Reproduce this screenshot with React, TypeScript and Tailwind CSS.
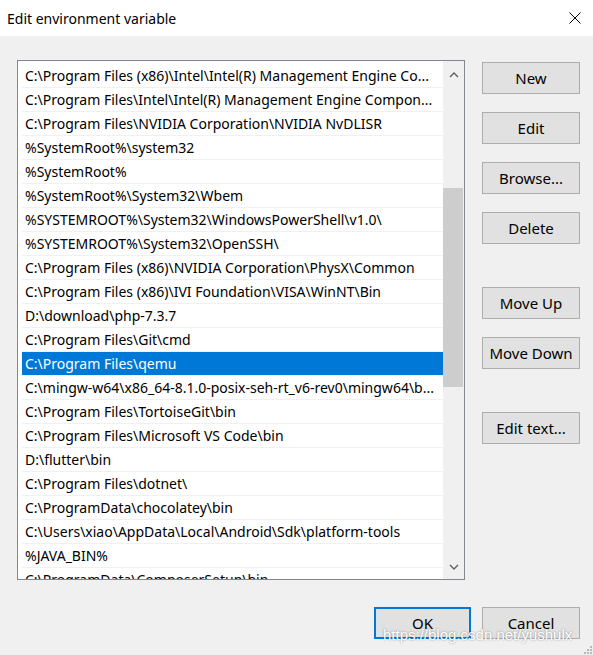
const paths = [
  "C:\\Program Files (x86)\\Intel\\Intel(R) Management Engine Co...",
  "C:\\Program Files\\Intel\\Intel(R) Management Engine Compon...",
  "C:\\Program Files\\NVIDIA Corporation\\NVIDIA NvDLISR",
  "%SystemRoot%\\system32",
  "%SystemRoot%",
  "%SystemRoot%\\System32\\Wbem",
  "%SYSTEMROOT%\\System32\\WindowsPowerShell\\v1.0\\",
  "%SYSTEMROOT%\\System32\\OpenSSH\\",
  "C:\\Program Files (x86)\\NVIDIA Corporation\\PhysX\\Common",
  "C:\\Program Files (x86)\\IVI Foundation\\VISA\\WinNT\\Bin",
  "D:\\download\\php-7.3.7",
  "C:\\Program Files\\Git\\cmd",
  "C:\\Program Files\\qemu",
  "C:\\mingw-w64\\x86_64-8.1.0-posix-seh-rt_v6-rev0\\mingw64\\b...",
  "C:\\Program Files\\TortoiseGit\\bin",
  "C:\\Program Files\\Microsoft VS Code\\bin",
  "D:\\flutter\\bin",
  "C:\\Program Files\\dotnet\\",
  "C:\\ProgramData\\chocolatey\\bin",
  "C:\\Users\\xiao\\AppData\\Local\\Android\\Sdk\\platform-tools",
  "%JAVA_BIN%",
  "C:\\ProgramData\\ComposerSetup\\bin",
];

const selectedIndex = 12;

function DialogButton({ label, className = "" }: { label: string; className?: string }) {
  return (
    <button
      type="button"
      className={`flex h-8 w-[98px] items-center justify-center border border-[#adadad] bg-[#e1e1e1] text-[15px] text-black ${className}`}
    >
      {label}
    </button>
  );
}

export default function App() {
  return (
    <div
      className="relative flex h-[655px] w-[593px] flex-col overflow-hidden bg-[#f0f0f0] text-black"
      style={{ fontFamily: '"Noto Sans", "Open Sans", sans-serif' }}
    >
      <div className="flex h-9 shrink-0 items-center justify-between bg-white pl-[7px] pr-[12px]">
        <span className="text-[14px]">Edit environment variable</span>
        <svg width="12" height="12" viewBox="0 0 12 12">
          <path d="M0.5 0.5 L11.5 11.5 M11.5 0.5 L0.5 11.5" stroke="#000" strokeWidth="1" fill="none" />
        </svg>
      </div>

      <div className="flex">
        <div className="ml-[17px] mt-[24px] flex h-[520px] w-[448px] border border-[#828790] bg-white">
          <div className="flex-1 overflow-hidden pl-[4px] pt-[3px]">
            {paths.map((p, i) => (
              <div
                key={i}
                className={`flex h-6 items-center whitespace-nowrap border-b border-[#f0f0f0] pl-[3px] text-[14px] ${
                  i === selectedIndex ? "bg-[#0078d7] text-white" : ""
                }`}
              >
                {p}
              </div>
            ))}
          </div>
          <div className="flex w-[21px] flex-col bg-[#f0f0f0]">
            <div className="flex h-[27px] items-center justify-center">
              <svg width="10" height="6" viewBox="0 0 10 6">
                <path d="M1 5 L5 1 L9 5" stroke="#606060" strokeWidth="1.4" fill="none" />
              </svg>
            </div>
            <div className="mr-[1px] mt-[100px] h-[199px] bg-[#cdcdcd]" />
            <div className="flex-1" />
            <div className="flex h-[27px] items-center justify-center pt-[2px]">
              <svg width="10" height="6" viewBox="0 0 10 6">
                <path d="M1 1 L5 5 L9 1" stroke="#606060" strokeWidth="1.4" fill="none" />
              </svg>
            </div>
          </div>
        </div>

        <div className="ml-[17px] mt-[26px] flex flex-col">
          <DialogButton label="New" />
          <DialogButton label="Edit" className="mt-[18px]" />
          <DialogButton label="Browse..." className="mt-[18px]" />
          <DialogButton label="Delete" className="mt-[18px]" />
          <DialogButton label="Move Up" className="mt-[43px]" />
          <DialogButton label="Move Down" className="mt-[18px]" />
          <DialogButton label="Edit text..." className="mt-[43px]" />
        </div>
      </div>

      <div className="mt-[27px] flex justify-end gap-[11px] pr-[13px]">
        <button
          type="button"
          className="flex h-8 w-[97px] items-center justify-center border-2 border-[#0078d7] bg-[#e1e1e1] text-[15px]"
        >
          OK
        </button>
        <DialogButton label="Cancel" />
      </div>

      {/* watermark from the source screenshot */}
      <div
        className="pointer-events-none absolute left-[383px] top-[624px] text-[15px] text-white [text-shadow:0_0_2px_rgba(0,0,0,0.45)]"
        style={{ fontFamily: '"Liberation Sans", Arial, sans-serif' }}
      >
        https://blog.csdn.net/yushulx
      </div>

      <svg width="10" height="10" viewBox="0 0 10 10" className="absolute bottom-[1px] right-[1px]">
        {[
          [8, 2],
          [8, 5],
          [5, 5],
          [8, 8],
          [5, 8],
          [2, 8],
        ].map(([x, y], i) => (
          <rect key={i} x={x} y={y} width="2" height="2" fill="#b8b8b8" />
        ))}
      </svg>
    </div>
  );
}
